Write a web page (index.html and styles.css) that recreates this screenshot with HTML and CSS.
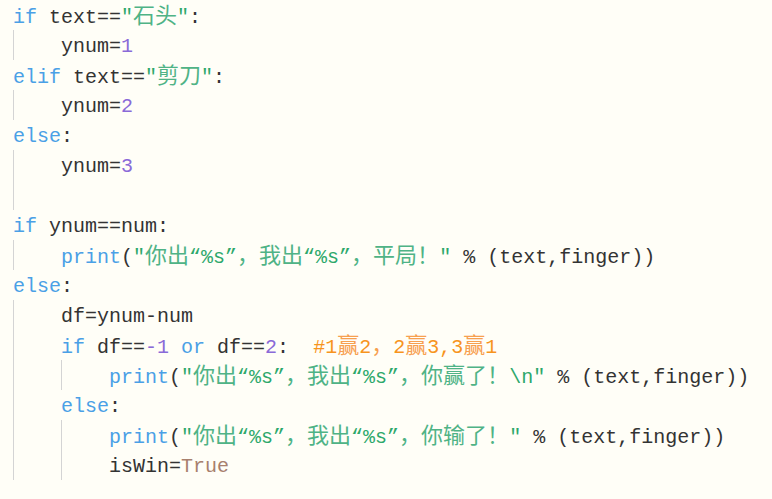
FILE: index.html
```html
<!DOCTYPE html>
<html>
<head>
<meta charset="utf-8">
<link rel="stylesheet" href="styles.css">
</head>
<body>
<div class="code">
  <div class="ln"><span class="kw">if</span> text==<span class="str">"<span class="cjk">石头</span>"</span>:</div>
  <div class="blk">
    <div class="ln">ynum=<span class="num">1</span></div>
  </div>
  <div class="ln"><span class="kw">elif</span> text==<span class="str">"<span class="cjk">剪刀</span>"</span>:</div>
  <div class="blk">
    <div class="ln">ynum=<span class="num">2</span></div>
  </div>
  <div class="ln"><span class="kw">else</span>:</div>
  <div class="blk">
    <div class="ln">ynum=<span class="num">3</span></div>
    <div class="ln"></div>
  </div>
  <div class="ln"><span class="kw">if</span> ynum==num:</div>
  <div class="blk">
    <div class="ln"><span class="kw">print</span>(<span class="str">"<span class="cjk">你出</span>“%s”<span class="cjk">，我出</span>“%s”<span class="cjk">，平局！</span>"</span> % (text,finger))</div>
  </div>
  <div class="ln"><span class="kw">else</span>:</div>
  <div class="blk">
    <div class="ln">df=ynum-num</div>
    <div class="ln"><span class="kw">if</span> df==<span class="num">-1</span> <span class="kw">or</span> df==<span class="num">2</span>:  <span class="cmt">#1<span class="cjk">赢</span>2<span class="cjk">，</span>2<span class="cjk">赢</span>3,3<span class="cjk">赢</span>1</span></div>
    <div class="blk">
      <div class="ln"><span class="kw">print</span>(<span class="str">"<span class="cjk">你出</span>“%s”<span class="cjk">，我出</span>“%s”<span class="cjk">，你赢了！</span>\n"</span> % (text,finger))</div>
    </div>
    <div class="ln"><span class="kw">else</span>:</div>
    <div class="blk">
      <div class="ln"><span class="kw">print</span>(<span class="str">"<span class="cjk">你出</span>“%s”<span class="cjk">，我出</span>“%s”<span class="cjk">，你输了！</span>"</span> % (text,finger))</div>
      <div class="ln">isWin=<span class="const">True</span></div>
    </div>
  </div>
</div>
</body>
</html>
```

FILE: styles.css
```css
html, body {
  margin: 0;
  padding: 0;
  background: #fffef7;
}
body {
  width: 772px;
  height: 499px;
  overflow: hidden;
}
.code {
  padding: 0 0 0 13px;
  font-family: "Liberation Mono", "Noto Sans CJK SC", monospace;
  font-size: 20px;
  color: #333333;
}
.ln {
  height: 28px;
  padding-top: 2px;
  line-height: 30px;
  white-space: pre;
}
.blk {
  border-left: 1px solid #d4d4d4;
  padding-left: 47px;
}
.kw { color: #4aa0e6; }
.str { color: #2da86b; }
.num { color: #8a6ad8; }
.cmt { color: #f7941d; }
.const { color: #a8806e; }
.cjk {
  font-family: "Noto Sans CJK SC", sans-serif;
  font-size: 22px;
  line-height: 1;
}
.str .cjk { color: #4fb386; }
.cmt .cjk { color: #f7a050; }
```
